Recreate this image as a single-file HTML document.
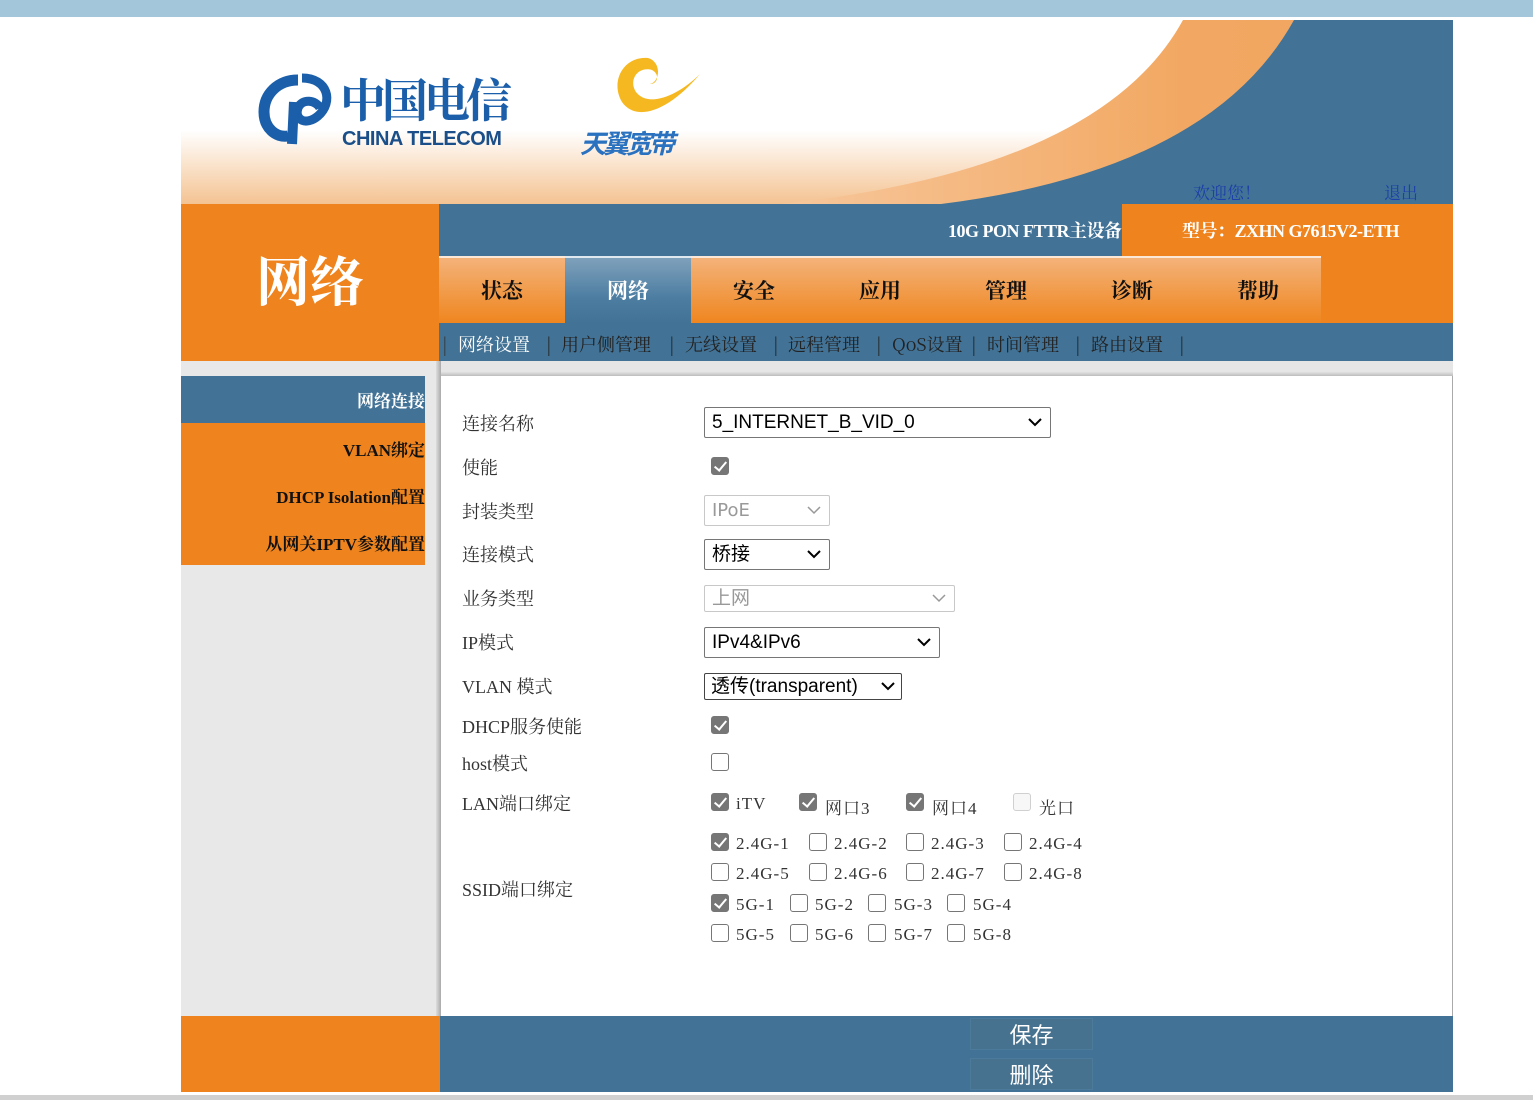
<!DOCTYPE html>
<html><head><meta charset="utf-8">
<style>
*{margin:0;padding:0;box-sizing:border-box}
body{width:1533px;height:1100px;position:relative;background:#fff;overflow:hidden;font-family:"Liberation Serif","Noto Serif CJK SC",serif}
.a{position:absolute}
.or{background:#ef841e}
.bl{background:#427396}
.tab{position:absolute;top:256px;width:126px;height:67px;background:linear-gradient(#f4b27a 0%,#f2a55e 30%,#ef861f 100%);border-top:2px solid #fce8d6;color:#111;font:bold 21px "Noto Serif CJK SC",serif;text-align:center;line-height:64px}
.tab.act{background:linear-gradient(#7fa1bb,#4d7ea2 60%,#427396);color:#fff;border-top-color:#dfe8ef}
.sub{position:absolute;top:331px;font:18px "Noto Serif CJK SC",serif;color:#222}
.lbl{position:absolute;left:462px;font:18px "Liberation Serif","Noto Serif CJK SC",serif;color:#333}
.sel{position:absolute;left:704px;height:31px;border:1px solid #767676;border-radius:2px;background:#fff;font:19px "Liberation Sans","Noto Sans CJK SC",sans-serif;color:#000;padding-left:7px;line-height:29px}
.sel.dis{border-color:#c8c8c8;color:#999}
.sel svg{position:absolute;right:8px;top:10px}
.cb{position:absolute;width:18px;height:18px;border-radius:3px;border:1.5px solid #767676;background:#fff}
.cb.on{background:#767676;border-color:#767676}
.cb.on::after{content:"";position:absolute;left:5px;top:1px;width:5px;height:10px;border:solid #fff;border-width:0 2.5px 2.5px 0;transform:rotate(40deg)}
.cb.dis{border-color:#d0d0d0;background:#f7f7f7}
.ct{position:absolute;font:17px "Liberation Serif","Noto Serif CJK SC",serif;color:#333;letter-spacing:1px}
.menu{position:absolute;left:181px;width:244px;text-align:right;font:bold 17px "Liberation Serif","Noto Serif CJK SC",serif;color:#111}
.btn{position:absolute;left:970px;width:123px;height:32px;background:#47728f;border:1px solid #4b7a9b;color:#fff;font:22px "Noto Sans CJK SC",sans-serif;text-align:center;line-height:30px}
</style></head><body>
<div class="a" style="left:0;top:0;width:1533px;height:17px;background:#a3c6da"></div>
<svg class="a" style="left:181px;top:20px" width="1272" height="184">
<defs>
<linearGradient id="g1" x1="0" y1="0" x2="0" y2="1"><stop offset="0.6" stop-color="#fff"/><stop offset="1" stop-color="#f4c392"/></linearGradient>
<linearGradient id="g2" x1="0" y1="0" x2="1" y2="0"><stop offset="0" stop-color="#f7c79c"/><stop offset="0.6" stop-color="#f2a862"/><stop offset="1" stop-color="#f0a45f"/></linearGradient>
</defs>
<rect width="1272" height="184" fill="url(#g1)"/>
<path d="M1002 0 Q920 150 600 184 L1272 184 L1272 0 Z" fill="url(#g2)"/>
<path d="M1113 0 L1272 0 L1272 184 L760 184 Q1030 150 1113 0 Z" fill="#427396"/>
</svg>
<svg class="a" style="left:258px;top:72px" width="84" height="78"><path d="M40 8 C20 8 6 22 6 40 C6 56 18 66 30 64" fill="none" stroke="#1b5faa" stroke-width="11"/><path d="M44 6 C70 6 76 30 60 44 C48 54 36 48 40 36 C44 26 58 28 62 36" fill="none" stroke="#1b5faa" stroke-width="9"/><path d="M36 30 L34 72" stroke="#1b5faa" stroke-width="10"/></svg>
<div class="a" style="left:340px;top:70px;font:bold 46px 'Noto Serif CJK SC',serif;color:#1b5faa;letter-spacing:-4px;line-height:56px">中国电信</div>
<div class="a" style="left:342px;top:128px;font:bold 20px 'Liberation Sans',sans-serif;color:#1b4f8a;letter-spacing:-0.5px">CHINA TELECOM</div>
<svg class="a" style="left:608px;top:52px" width="100" height="70"><path d="M40 6 C15 4 2 30 14 50 C28 70 60 60 92 22 C70 44 40 56 28 40 C20 28 30 14 44 18 C52 22 50 32 42 32 C52 30 54 10 40 6Z" fill="#f5b820"/></svg>
<div class="a" style="left:580px;top:124px;font:bold italic 26px 'Noto Sans CJK SC',sans-serif;color:#2a72c0;letter-spacing:-3px">天翼宽带</div>
<div class="a" style="left:1193px;top:181px;font:17px 'Noto Serif CJK SC',serif;color:#1d3fa8;line-height:22px">欢迎您！</div>
<div class="a" style="left:1384px;top:181px;font:17px 'Noto Serif CJK SC',serif;color:#1d3fa8;line-height:22px">退出</div>
<div class="a or" style="left:181px;top:204px;width:258px;height:157px"></div>
<div class="a" style="left:256px;top:246px;font:bold 54px 'Noto Serif CJK SC',serif;color:#fff;line-height:66px">网络</div>
<div class="a bl" style="left:439px;top:204px;width:683px;height:52px"></div>
<div class="a or" style="left:1122px;top:204px;width:331px;height:52px"></div>
<div class="a" style="left:948px;top:217px;font:bold 18px 'Liberation Serif','Noto Serif CJK SC',serif;color:#fff;letter-spacing:-0.5px">10G PON FTTR主设备</div>
<div class="a" style="left:1182px;top:217px;font:bold 18px 'Liberation Serif','Noto Serif CJK SC',serif;color:#fff;letter-spacing:-0.5px">型号：ZXHN G7615V2-ETH</div>
<div class="a or" style="left:1321px;top:256px;width:132px;height:67px"></div>
<div class="tab" style="left:439px">状态</div>
<div class="tab act" style="left:565px">网络</div>
<div class="tab" style="left:691px">安全</div>
<div class="tab" style="left:817px">应用</div>
<div class="tab" style="left:943px">管理</div>
<div class="tab" style="left:1069px">诊断</div>
<div class="tab" style="left:1195px">帮助</div>
<div class="a bl" style="left:439px;top:323px;width:1014px;height:38px"></div>
<div class="sub" style="left:442px;color:#333">|</div>
<div class="sub" style="left:458px;color:#fff">网络设置</div>
<div class="sub" style="left:546px">|</div>
<div class="sub" style="left:561px">用户侧管理</div>
<div class="sub" style="left:669px">|</div>
<div class="sub" style="left:685px">无线设置</div>
<div class="sub" style="left:773px">|</div>
<div class="sub" style="left:788px">远程管理</div>
<div class="sub" style="left:876px">|</div>
<div class="sub" style="left:892px">QoS设置</div>
<div class="sub" style="left:971px">|</div>
<div class="sub" style="left:987px">时间管理</div>
<div class="sub" style="left:1075px">|</div>
<div class="sub" style="left:1091px">路由设置</div>
<div class="sub" style="left:1179px">|</div>
<div class="a" style="left:181px;top:361px;width:259px;height:655px;background:#e8e8e8"></div>
<div class="a bl" style="left:181px;top:376px;width:244px;height:47px"></div>
<div class="a or" style="left:181px;top:423px;width:244px;height:142px"></div>
<div class="menu" style="top:387px;color:#fff">网络连接</div>
<div class="menu" style="top:436px">VLAN绑定</div>
<div class="menu" style="top:483px">DHCP Isolation配置</div>
<div class="menu" style="top:530px">从网关IPTV参数配置</div>
<div class="a" style="left:438px;top:361px;width:1015px;height:15px;background:linear-gradient(#e6e6e6 70%,#bdbdbd)"></div>
<div class="a" style="left:436px;top:361px;width:5px;height:655px;background:linear-gradient(90deg,#ddd,#aaa)"></div>
<div class="a" style="left:441px;top:376px;width:1012px;height:640px;background:#fff;border-right:1px solid #aaa"></div>
<div class="lbl" style="top:410px">连接名称</div>
<div class="sel" style="top:407px;width:347px">5_INTERNET_B_VID_0<svg width="14" height="9"><path d="M1 1l6 6 6-6" fill="none" stroke="#000" stroke-width="2"/></svg></div>
<div class="lbl" style="top:454px">使能</div>
<div class="cb on" style="left:711px;top:457px"></div>
<div class="lbl" style="top:498px">封装类型</div>
<div class="sel dis" style="top:495px;width:126px;font-family:'DejaVu Sans',sans-serif;font-size:18px">IPoE<svg width="14" height="9"><path d="M1 1l6 6 6-6" fill="none" stroke="#999" stroke-width="1.5"/></svg></div>
<div class="lbl" style="top:541px">连接模式</div>
<div class="sel" style="top:539px;width:126px">桥接<svg width="14" height="9"><path d="M1 1l6 6 6-6" fill="none" stroke="#000" stroke-width="2"/></svg></div>
<div class="lbl" style="top:585px">业务类型</div>
<div class="sel dis" style="top:585px;width:251px;height:27px;line-height:25px">上网<svg width="14" height="9" style="top:8px"><path d="M1 1l6 6 6-6" fill="none" stroke="#999" stroke-width="1.5"/></svg></div>
<div class="lbl" style="top:629px">IP模式</div>
<div class="sel" style="top:627px;width:236px">IPv4&amp;IPv6<svg width="14" height="9"><path d="M1 1l6 6 6-6" fill="none" stroke="#000" stroke-width="2"/></svg></div>
<div class="lbl" style="top:673px">VLAN 模式</div>
<div class="sel" style="top:673px;width:198px;height:27px;line-height:25px;padding-left:6px;border-color:#444">透传(transparent)<svg width="14" height="9" style="top:8px;right:6px"><path d="M1 1l6 6 6-6" fill="none" stroke="#000" stroke-width="2"/></svg></div>
<div class="lbl" style="top:713px">DHCP服务使能</div>
<div class="cb on" style="left:711px;top:716px"></div>
<div class="lbl" style="top:750px">host模式</div>
<div class="cb" style="left:711px;top:753px"></div>
<div class="lbl" style="top:790px">LAN端口绑定</div>
<div class="cb on" style="left:711px;top:793px"></div><div class="ct" style="left:736px;top:794px">iTV</div>
<div class="cb on" style="left:799px;top:793px"></div><div class="ct" style="left:825px;top:794px">网口3</div>
<div class="cb on" style="left:906px;top:793px"></div><div class="ct" style="left:932px;top:794px">网口4</div>
<div class="cb dis" style="left:1013px;top:793px"></div><div class="ct" style="left:1039px;top:794px">光口</div>
<div class="lbl" style="top:876px">SSID端口绑定</div>
<div class="cb on" style="left:711px;top:833px"></div><div class="ct" style="left:736px;top:834px">2.4G-1</div>
<div class="cb" style="left:809px;top:833px"></div><div class="ct" style="left:834px;top:834px">2.4G-2</div>
<div class="cb" style="left:906px;top:833px"></div><div class="ct" style="left:931px;top:834px">2.4G-3</div>
<div class="cb" style="left:1004px;top:833px"></div><div class="ct" style="left:1029px;top:834px">2.4G-4</div>
<div class="cb" style="left:711px;top:863px"></div><div class="ct" style="left:736px;top:864px">2.4G-5</div>
<div class="cb" style="left:809px;top:863px"></div><div class="ct" style="left:834px;top:864px">2.4G-6</div>
<div class="cb" style="left:906px;top:863px"></div><div class="ct" style="left:931px;top:864px">2.4G-7</div>
<div class="cb" style="left:1004px;top:863px"></div><div class="ct" style="left:1029px;top:864px">2.4G-8</div>
<div class="cb on" style="left:711px;top:894px"></div><div class="ct" style="left:736px;top:895px">5G-1</div>
<div class="cb" style="left:790px;top:894px"></div><div class="ct" style="left:815px;top:895px">5G-2</div>
<div class="cb" style="left:868px;top:894px"></div><div class="ct" style="left:894px;top:895px">5G-3</div>
<div class="cb" style="left:947px;top:894px"></div><div class="ct" style="left:973px;top:895px">5G-4</div>
<div class="cb" style="left:711px;top:924px"></div><div class="ct" style="left:736px;top:925px">5G-5</div>
<div class="cb" style="left:790px;top:924px"></div><div class="ct" style="left:815px;top:925px">5G-6</div>
<div class="cb" style="left:868px;top:924px"></div><div class="ct" style="left:894px;top:925px">5G-7</div>
<div class="cb" style="left:947px;top:924px"></div><div class="ct" style="left:973px;top:925px">5G-8</div>
<div class="a or" style="left:181px;top:1016px;width:259px;height:76px"></div>
<div class="a bl" style="left:440px;top:1016px;width:1013px;height:76px"></div>
<div class="btn" style="top:1018px">保存</div>
<div class="btn" style="top:1058px">删除</div>
<div class="a" style="left:0;top:1095px;width:1533px;height:5px;background:#d0d0d0"></div>
</body></html>
